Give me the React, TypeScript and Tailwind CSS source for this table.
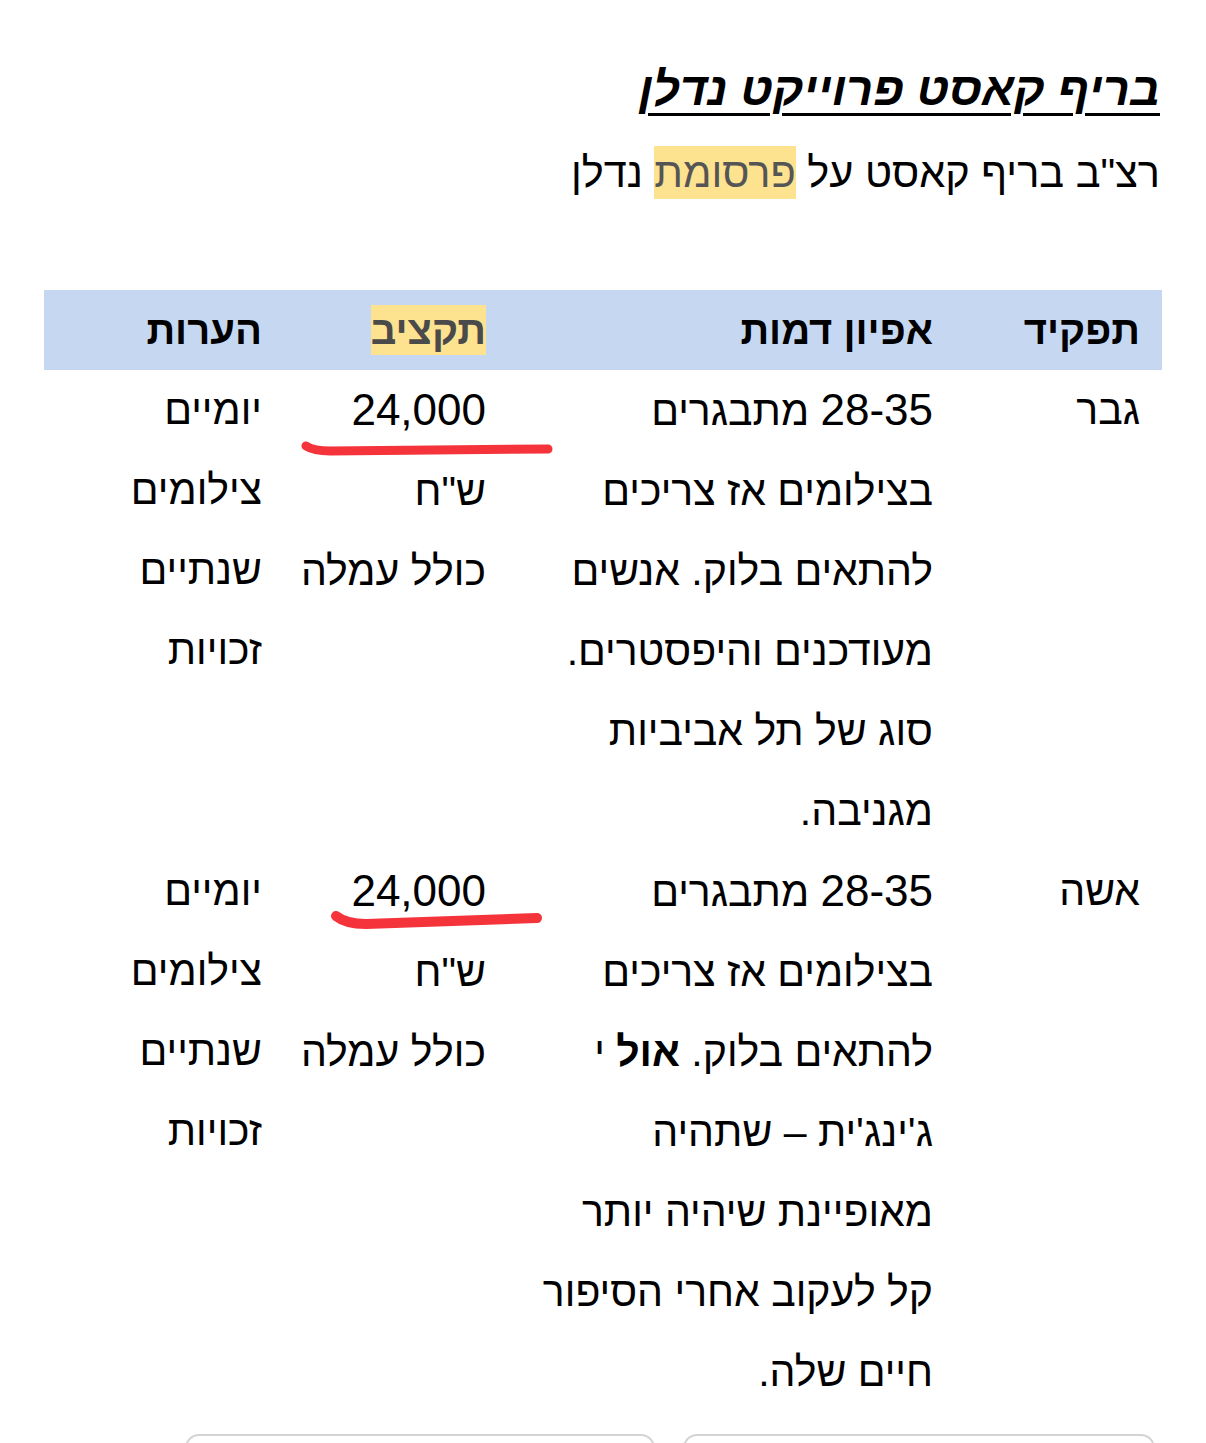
import React from 'react'

const font = { fontFamily: '"Liberation Sans", Arial, "DejaVu Sans", sans-serif' }

type Row = {
  role: string
  desc: React.ReactNode[]
  budget: React.ReactNode[]
  notes: string[]
}

// digits in the reference run a little larger than the Hebrew
const price = <span className="text-[44px]">24,000</span>
const ages = (
  <>
    <span className="text-[44px]">28-35</span> מתבגרים
  </>
)

const rows: Row[] = [
  {
    role: 'גבר',
    desc: [
      ages,
      'בצילומים אז צריכים',
      'להתאים בלוק. אנשים',
      'מעודכנים והיפסטרים.',
      'סוג של תל אביביות',
      'מגניבה.',
    ],
    budget: [price, 'ש"ח', 'כולל עמלה'],
    notes: ['יומיים', 'צילומים', 'שנתיים', 'זכויות'],
  },
  {
    role: 'אשה',
    desc: [
      ages,
      'בצילומים אז צריכים',
      <>
        להתאים בלוק. <b>אול</b> י
      </>,
      'ג\'ינג\'ית – שתהיה',
      'מאופיינת שיהיה יותר',
      'קל לעקוב אחרי הסיפור',
      'חיים שלה.',
    ],
    budget: [price, 'ש"ח', 'כולל עמלה'],
    notes: ['יומיים', 'צילומים', 'שנתיים', 'זכויות'],
  },
]

function Lines({ items }: { items: React.ReactNode[] }) {
  return (
    <>
      {items.map((l, i) => (
        <div key={i} className="whitespace-nowrap">
          {l}
        </div>
      ))}
    </>
  )
}

export default function App() {
  return (
    <div className="relative h-[1443px] overflow-hidden bg-white text-black" style={font} dir="rtl">
      <div className="px-[44px] pt-[59px]">
        {/* Title */}
        <h1 className="pr-[2px] text-[47px] font-bold italic underline decoration-[3px] underline-offset-[8px] leading-[60px]">
          בריף קאסט פרוייקט נדלן
        </h1>
        <p className="mt-[26px] pr-[2px] text-[41.5px] leading-[56px]">
          רצ"ב בריף קאסט על{' '}
          <span className="bg-[#fde28f] py-[3px] text-[#555555]">פרסומת</span> נדלן
        </p>

        {/* Table */}
        <table className="mt-[89px] w-full table-fixed border-collapse text-[41px] leading-[80px]">
          <colgroup>
            <col className="w-[207px]" />
            <col className="w-[447px]" />
            <col className="w-[224px]" />
            <col className="w-[240px]" />
          </colgroup>
          <thead>
            <tr className="bg-[#c6d8f1] text-[40px]">
              <th className="px-[22px] text-right font-bold">תפקיד</th>
              <th className="px-[22px] text-right font-bold">אפיון דמות</th>
              <th className="pr-[22px] text-right font-bold">
                <span className="bg-[#fde28f] py-[3px] text-[#4a4a4a]">תקציב</span>
              </th>
              <th className="px-[22px] text-right font-bold">הערות</th>
            </tr>
          </thead>
          <tbody>
            {rows.map((r, i) => (
              <tr key={i} className="align-top">
                <td className="px-[22px]">{r.role}</td>
                <td className="px-[22px]">
                  <Lines items={r.desc} />
                </td>
                <td className="pr-[22px]">
                  <Lines items={r.budget} />
                </td>
                <td className="px-[22px]">
                  <Lines items={r.notes} />
                </td>
              </tr>
            ))}
          </tbody>
        </table>

        {/* Buttons */}
        <div className="mt-[22px] flex justify-start gap-[28px] pr-[7px]">
          <div className="h-[60px] w-[472px] rounded-[14px] border-2 border-[#d4d4d4]" />
          <div className="h-[60px] w-[470px] rounded-[14px] border-2 border-[#d4d4d4]" />
        </div>
      </div>

      {/* Red marker strokes over the budgets */}
      <svg
        className="pointer-events-none absolute inset-0"
        width="1206"
        height="1443"
        viewBox="0 0 1206 1443"
        fill="none"
      >
        <path
          d="M306 446 Q314 451 330 451 L548 449"
          stroke="#f4333b"
          strokeWidth="9"
          strokeLinecap="round"
        />
        <path
          d="M336 916 Q346 924 366 924 L537 918"
          stroke="#f4333b"
          strokeWidth="10"
          strokeLinecap="round"
        />
      </svg>
    </div>
  )
}
